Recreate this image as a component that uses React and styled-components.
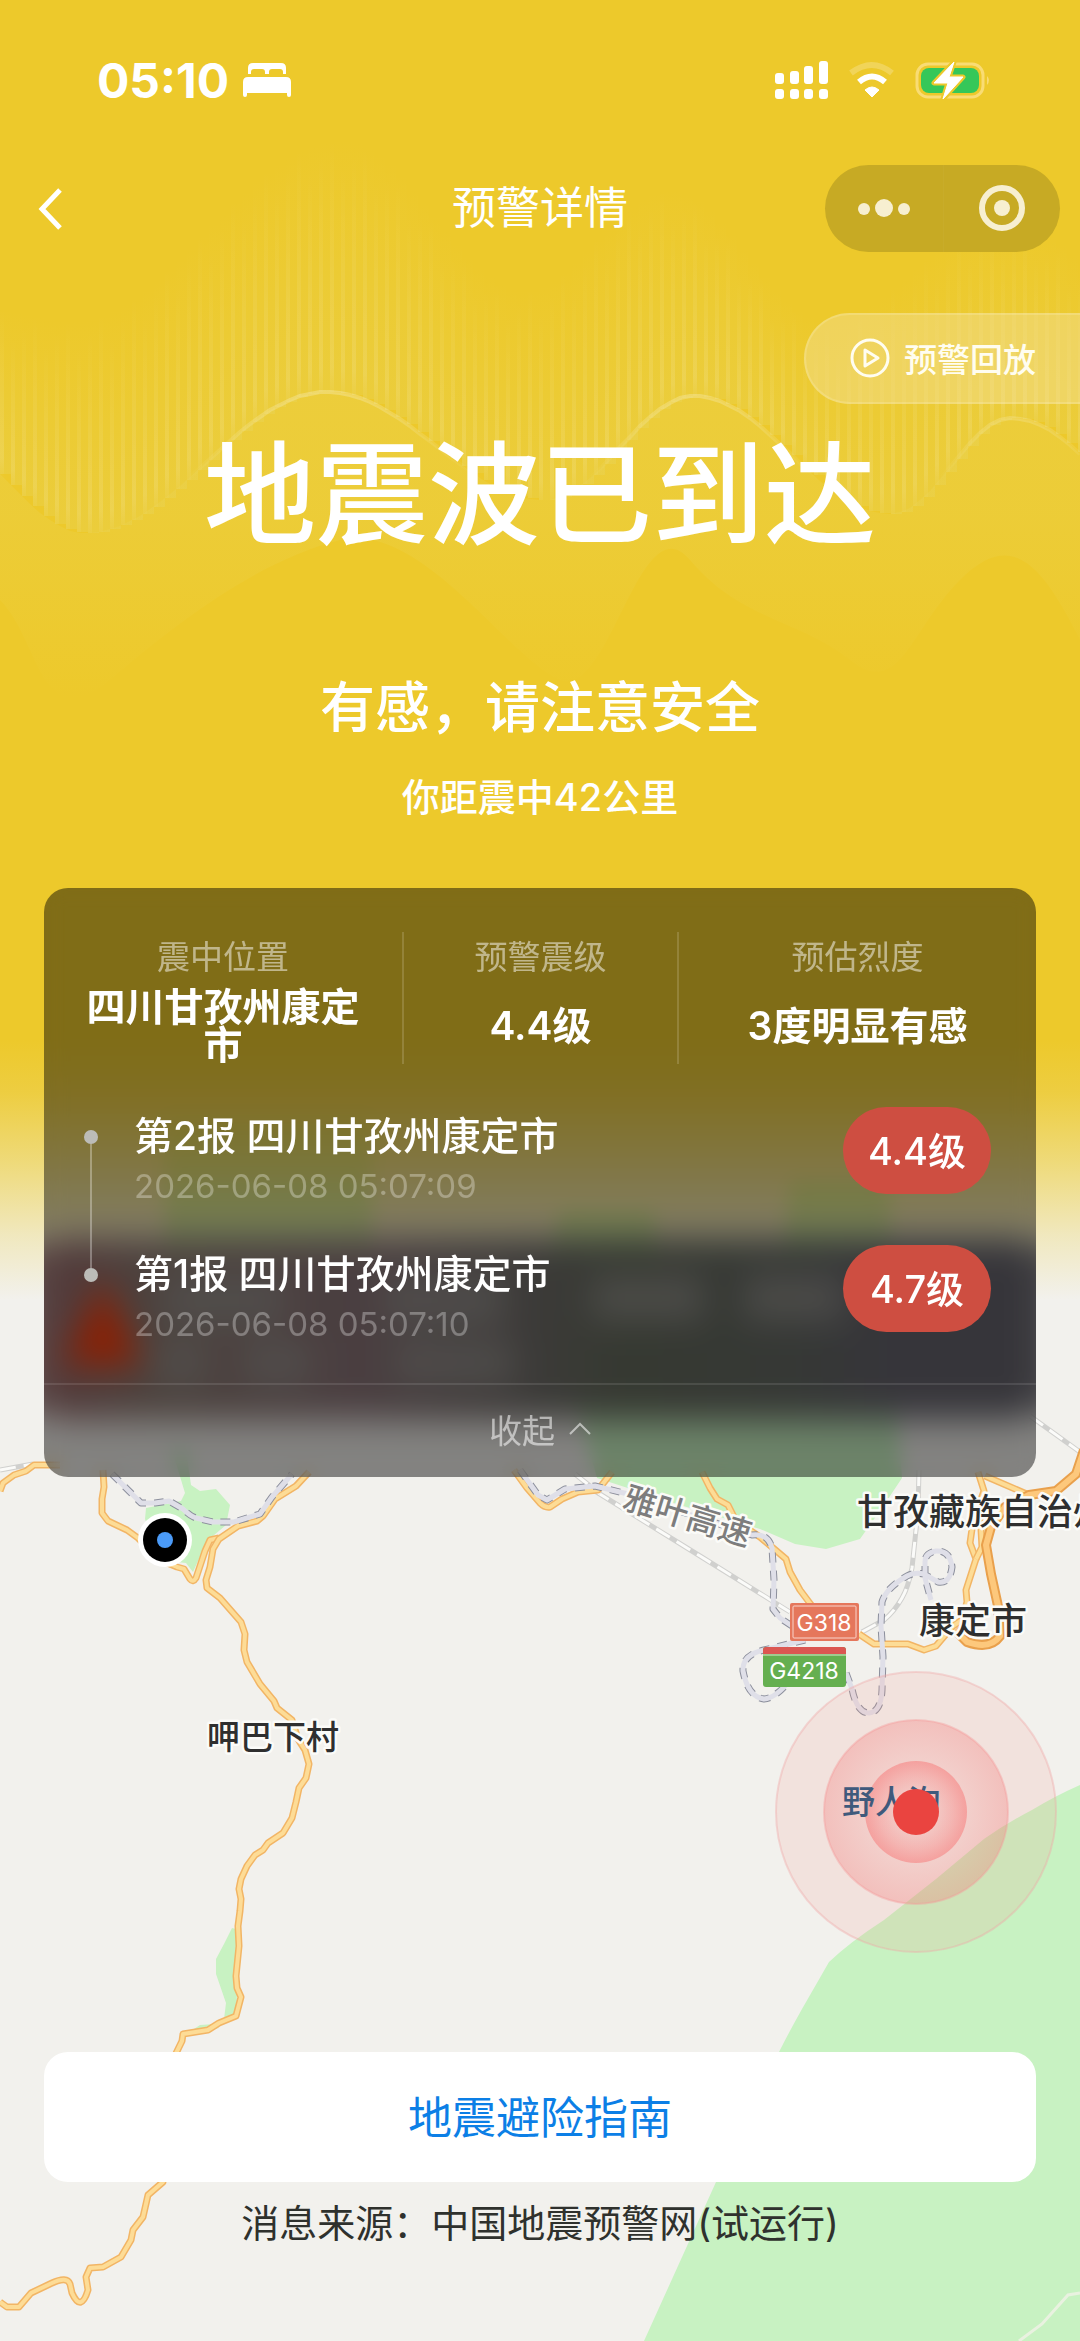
import { useState } from 'react';
import styled, { createGlobalStyle } from 'styled-components';


const stats = [
  { label: '震中位置', value: '四川甘孜州康定市' },
  { label: '预警震级', value: '4.4级' },
  { label: '预估烈度', value: '3度明显有感' },
]

const reports = [
  { id: 2, title: '第2报 四川甘孜州康定市', time: '2026-06-08 05:07:09', level: '4.4级' },
  { id: 1, title: '第1报 四川甘孜州康定市', time: '2026-06-08 05:07:10', level: '4.7级' },
]

// Key points of the seismic curve and of the height its bars fade out at
const CURVE = [[-60, 440], [85, 533], [327, 392], [545, 500], [694, 396], [890, 514], [1012, 418], [1180, 520]];
const ENVELOPE = [[-60, 300], [70, 320], [337, 140], [520, 290], [665, 190], [820, 320], [1000, 220], [1180, 330]];

// Cosine interpolation between the key points
const heightAt = (points, x) => {
  const i = points.findIndex((p) => p[0] > x);
  const [x0, y0] = points[i - 1];
  const [x1, y1] = points[i];
  const t = (1 - Math.cos(((x - x0) / (x1 - x0)) * Math.PI)) / 2;
  return Math.round(y0 + (y1 - y0) * t);
}

const barXs = Array.from({ length: 99 }, (_, i) => i * 11);
const curveXs = Array.from({ length: 109 }, (_, i) => i * 10);
const curvePath = 'M' + curveXs.map((x) => `${x} ${heightAt(CURVE, x)}`).join('L');

const Waves = () => (
  <WaveSvg viewBox="0 0 1080 760" preserveAspectRatio="none" aria-hidden="true">
    <defs>
      <linearGradient id="bar" x1="0" y1="0" x2="0" y2="1">
        <stop offset="0" stopColor="#fff" stopOpacity="0" />
        <stop offset="0.6" stopColor="#fff" stopOpacity="0.08" />
        <stop offset="0.9" stopColor="#fff" stopOpacity="0.12" />
        <stop offset="1" stopColor="#fff" stopOpacity="0.04" />
      </linearGradient>
      <linearGradient id="veil" x1="0" y1="0" x2="0" y2="1">
        <stop offset="0" stopColor="#e6d86a" stopOpacity="0" />
        <stop offset="1" stopColor="#e6d86a" stopOpacity="0.26" />
      </linearGradient>
      <linearGradient id="swell" x1="0" y1="390" x2="0" y2="700" gradientUnits="userSpaceOnUse">
        <stop offset="0" stopColor="#ead968" stopOpacity="0.26" />
        <stop offset="0.4" stopColor="#ead968" stopOpacity="0.2" />
        <stop offset="1" stopColor="#ead968" stopOpacity="0" />
      </linearGradient>
      <linearGradient id="crest" x1="0" y1="390" x2="0" y2="480" gradientUnits="userSpaceOnUse">
        <stop offset="0" stopColor="#fff" stopOpacity="0.24" />
        <stop offset="1" stopColor="#fff" stopOpacity="0" />
      </linearGradient>
    </defs>
    {barXs.map((x) => {
      const top = heightAt(ENVELOPE, x);
      const height = heightAt(CURVE, x) - top;
      return (
        <g key={x}>
          <rect x={x} y={top} width="11" height={height} fill="url(#veil)" />
          <rect x={x} y={top + (x % 3) * 14} width="4" height={height - (x % 3) * 14} fill="url(#bar)" />
        </g>
      )
    })}
    <path d={`${curvePath}V640C1040 560 1010 530 960 580S900 700 850 660S740 620 690 560S610 700 560 680S420 520 340 540S180 620 110 680S40 640 0 600Z`} fill="url(#swell)" />
    <path d={curvePath} fill="none" stroke="url(#crest)" strokeWidth="4" />
  </WaveSvg>
)

const Road = ({ d, main }) => (
  <>
    <path d={d} stroke={main ? '#e9a04c' : '#f2b565'} strokeWidth={main ? 10 : 7} />
    <path d={d} stroke={main ? '#fdc87c' : '#fddc96'} strokeWidth={main ? 6 : 4} />
  </>
)

const Motorway = ({ d }) => (
  <>
    <path d={d} stroke="#8c8f9c" strokeWidth="7" strokeDasharray="10 8" />
    <path d={d} stroke="#dfdfe8" strokeWidth="5" />
  </>
)

const Railway = ({ d }) => (
  <>
    <path d={d} stroke="#d0d0ce" strokeWidth="5" />
    <path d={d} stroke="#fbfbf9" strokeWidth="3" strokeDasharray="16 8" strokeLinecap="butt" />
  </>
)

const Map = () => (
  <MapSvg viewBox="0 0 1080 2341" preserveAspectRatio="xMidYMid slice" role="img" aria-label="震中地图">
    <defs>
      <radialGradient id="ring">
        <stop offset="0.4" stopColor="#f47070" stopOpacity="0.12" />
        <stop offset="1" stopColor="#f47070" stopOpacity="0.3" />
      </radialGradient>
      <radialGradient id="core">
        <stop offset="0.4" stopColor="#f87070" stopOpacity="0.12" />
        <stop offset="1" stopColor="#f86868" stopOpacity="0.45" />
      </radialGradient>
    </defs>

    <g fill="#c8f2c2">
      <path d="M165 1120H372V1260H165Z" />
      <path d="M560 1210H655V1300H540ZM790 1180H890V1300H780Z" />
      <path d="M172 1450L185 1493L181 1501L146 1508L145 1519L160 1560L186 1563L193 1572L207 1541L226 1525L230 1505L216 1489L200 1491L191 1485L186 1450Z" />
      <path d="M570 1380L597 1478L680 1505L760 1529L795 1544L826 1549L860 1539L884 1505L902 1478L895 1380Z" />
      <path d="M232 1928L224 1944L216 1959L216 1974L226 2003L224 2019L236 2015L240 1930ZM188 2033L200 2025L215 2024L219 2028Z" />
      <path d="M1080 1785Q1055 1796 1032 1810Q1005 1824 984 1839L936 1879L884 1920Q850 1942 829 1962L802 2009Q788 2034 779 2052L716 2182L644 2341H1080Z" />
    </g>
    <path d="M1080 2293L1068 2295L1042 2324L1019 2341" fill="none" stroke="#e9f2e0" strokeWidth="3" />

    <g fill="none" strokeLinejoin="round">
      <Railway d="M0 1470L33 1464" />
      <Railway d="M595 1491L700 1556L790 1612" />
      <Railway d="M575 1474L600 1494" />
      <Railway d="M919 1470L918 1511L912 1568Q908 1588 902 1598Q894 1612 884 1620L862 1632" />
      <Railway d="M1030 1416L1080 1452" />

      <Road d="M0 1491L3 1483L14 1475L26 1471L34 1465H60" />
      <Road d="M103 1470L104 1487L102 1499L102 1513L108 1521L127 1530L138 1538L160 1560L177 1567L184 1569L190 1579Q193 1583 196 1578L205 1551L210 1540L219 1538" />
      <Road d="M309 1472L296 1486L275 1499L263 1516L257 1521L238 1526L219 1539L213 1549L210 1567L206 1580L207 1588L220 1598L241 1622L245 1634L244 1650L247 1662L260 1684L274 1701L277 1708L292 1720L298 1739L305 1750L309 1764L306 1778L299 1788L296 1802L292 1818L286 1828L283 1833L268 1843L263 1850L255 1855L247 1866L241 1879L239 1889L241 1899L240 1911L238 1926L239 1946L236 1976L237 1988L241 1997L236 2016L219 2023L208 2030L183 2034L182 2041L163 2080V2182L148 2195L143 2217L133 2230L131 2240L121 2257L103 2267L90 2268L86 2277L88 2290Q81 2313 72 2293L70 2284Q67 2276 52 2283L31 2293L19 2307H7L0 2302" />
      <Road d="M514 1470L527 1488L540 1503Q545 1508 550 1507L562 1499L578 1492L598 1490L612 1472" />
      <Road d="M702 1472L710 1488L717 1499L728 1505L736 1521L760 1537L786 1559L790 1572L800 1590L812 1606" />
      <Road d="M859 1634L874 1644L908 1644L924 1650L936 1646L953 1626L962 1620L967 1602L966 1590L976 1559L970 1543L973 1522L984 1491L978 1472" />
      <Road d="M976 1559L982 1547L981 1529L990 1510" />
      <Road d="M985 1476L1029 1495" />
      <Road main d="M1084 1450L1076 1474L1056 1491L1029 1495L1005 1507L991 1527L986 1545L991 1574L998 1606L1000 1636Q990 1650 967 1642L955 1630" />

      <Motorway d="M112 1474L129 1491L141 1503H155L169 1501L183 1509Q190 1516 196 1518L213 1522H234L260 1514L272 1497L292 1474" />
      <Motorway d="M520 1470L538 1495L547 1500L565 1489L595 1486L628 1494L752 1535Q768 1533 772 1548L774 1580L773 1609L780 1618L795 1628" />
      <Motorway d="M805 1640L764 1650Q742 1655 743 1671Q748 1697 764 1699Q776 1698 790 1680" />
      <Motorway d="M846 1673L852 1689Q857 1713 869 1713Q881 1712 882 1690L883 1657L881 1626L882 1602Q886 1588 907 1576Q914 1572 924 1574L938 1582Q950 1584 952 1567Q950 1550 936 1551Q925 1553 925 1562V1578L931 1600" />
    </g>

    <MapLabel x="207" y="1749" size={33}>呷巴下村</MapLabel>
    <MapLabel x="857" y="1525" size={36}>甘孜藏族自治州</MapLabel>
    <MapLabel x="919" y="1634" size={36}>康定市</MapLabel>
    <MapLabel x="621" y="1508" size={33} tone="#7d7d7d" transform="rotate(17 621 1508)">雅叶高速</MapLabel>

    <rect x="790" y="1603" width="69" height="38" rx="2" fill="#e5775c" />
    <rect x="793" y="1606" width="63" height="32" rx="1" fill="none" stroke="#f9d5cb" strokeWidth="1" />
    <Shield x="824" y="1631">G318</Shield>
    <rect x="763" y="1647" width="83" height="40" rx="3" fill="#65af50" />
    <path d="M763 1654V1650Q763 1647 766 1647H843Q846 1647 846 1650V1654Z" fill="#db5752" />
    <path d="M763 1655H846" stroke="#d9e8cf" strokeWidth="1" />
    <Shield x="804" y="1679">G4218</Shield>

    <circle cx="916" cy="1812" r="140" fill="#f29c90" fillOpacity="0.17" stroke="#f0a8a8" strokeOpacity="0.4" strokeWidth="2" />
    <circle cx="916" cy="1812" r="92" fill="url(#ring)" stroke="#f49a9a" strokeOpacity="0.4" strokeWidth="2" />
    <circle cx="916" cy="1812" r="51" fill="url(#core)" />
    <MapLabel x="842" y="1814" size={33} tone="#3f5a7c" bare>野人沟</MapLabel>
    <circle cx="916" cy="1812" r="23" fill="#ea4440" />

    <circle cx="165" cy="1540" r="27" fill="#fff" />
    <circle cx="165" cy="1540" r="22" fill="#000" />
    <circle cx="165" cy="1540" r="8" fill="#4b9bf8" />
  </MapSvg>
)

// Map notice that shows only as a blur through the card
const Notice = () => (
  <NoticeClip>
    <NoticeSvg viewBox="0 0 992 180" preserveAspectRatio="none" aria-hidden="true">
      <defs>
        <linearGradient id="notice">
          <stop offset="0" stopColor="#9a6a6c" />
          <stop offset="0.12" stopColor="#8c7a72" />
          <stop offset="0.32" stopColor="#8a7478" />
          <stop offset="0.5" stopColor="#6e6c68" />
          <stop offset="0.58" stopColor="#646a5c" />
          <stop offset="0.75" stopColor="#646863" />
          <stop offset="0.85" stopColor="#65636c" />
        </linearGradient>
      </defs>
      <rect x="-10" width="1012" height="180" rx="30" fill="url(#notice)" />
      <g fill="#9a9994" fillOpacity="0.7">
        <rect x="120" y="36" width="120" height="50" />
        <rect x="340" y="36" width="120" height="50" />
        <rect x="548" y="36" width="112" height="46" />
        <rect x="700" y="36" width="100" height="46" />
        <rect x="112" y="104" width="50" height="40" />
        <rect x="200" y="104" width="66" height="40" />
        <rect x="350" y="104" width="120" height="40" />
      </g>
      <path d="M59 40L98 126H20Z" fill="#ff3c08" />
    </NoticeSvg>
  </NoticeClip>
)

const StatusIcons = () => (
  <svg width="216" height="40" viewBox="0 0 216 40" aria-hidden="true">
    <g fill="#fff">
      <rect x="0" y="13" width="9" height="11" rx="3" />
      <rect x="15" y="11" width="9" height="13" rx="3" />
      <rect x="29" y="6" width="9" height="18" rx="3" />
      <rect x="44" y="1" width="9" height="23" rx="3" />
      <rect x="0" y="29" width="9" height="10" rx="3" />
      <rect x="15" y="29" width="9" height="10" rx="3" />
      <rect x="29" y="29" width="9" height="10" rx="3" />
      <rect x="44" y="29" width="9" height="10" rx="3" />
      <path d="M97 37L90 30Q97 24 104 30Z" strokeLinejoin="round" stroke="#fff" strokeWidth="1" />
    </g>
    <path d="M84 22Q97 11 110 22" fill="none" stroke="#fff" strokeWidth="6" />
    <path d="M76 13Q97 -3 117 13" fill="none" stroke="#f4dc78" strokeOpacity="0.6" strokeWidth="6" />
    <rect x="142" y="4" width="66" height="33" rx="11" fill="none" stroke="#f9dc74" strokeWidth="3" />
    <rect x="146" y="8" width="58" height="25" rx="8" fill="#35c759" />
    <path d="M212 16Q216 20 212 25Z" fill="#f9dc74" />
    <path d="M179 2L159 23H173L168 39L188 17H174Z" fill="#fff" stroke="#edc92b" strokeWidth="5" paintOrder="stroke" strokeLinejoin="round" />
    <path d="M179 2L159 23H173L168 39L188 17H174Z" fill="#fff" stroke="#fff" strokeWidth="1" strokeLinejoin="round" />
  </svg>
)

const App = () => {

  const [open, setOpen] = useState(true);

  return (
    <Screen>
      <GlobalStyle />
      <Map />
      <Tint><Waves /></Tint>

      <Content>
        <StatusBar>
          <Clock>
            05:10
            <svg width="48" height="36" viewBox="0 0 48 36" fill="#fff" aria-hidden="true">
              <path d="M5 12V6Q5 1 10 1H38Q43 1 43 6V12H40V10Q40 7 37 7H29Q26 7 26 10V12H22V10Q22 7 19 7H11Q8 7 8 10V12Z" />
              <path d="M0 33V20Q0 15 5 15H43Q48 15 48 20V33Q48 35 46 35T44 33V31H4V33Q4 35 2 35T0 33Z" />
            </svg>
          </Clock>
          <StatusIcons />
        </StatusBar>

        <NavBar>
          <BackButton type="button" aria-label="返回">
            <svg width="28" height="44" viewBox="0 0 28 44" fill="none" stroke="#fff" strokeWidth="5" aria-hidden="true">
              <path d="M24 4L6 23L24 42" />
            </svg>
          </BackButton>
          <NavTitle>预警详情</NavTitle>
          <Capsule>
            <CapsuleButton type="button" aria-label="更多">
              <svg width="54" height="48" viewBox="0 0 54 48" fill="#f7efd0" aria-hidden="true">
                <circle cx="7" cy="25" r="6" />
                <circle cx="27" cy="24" r="9" />
                <circle cx="47" cy="25" r="6" />
              </svg>
            </CapsuleButton>
            <CapsuleButton type="button" aria-label="关闭">
              <svg width="48" height="48" viewBox="0 0 48 48" aria-hidden="true">
                <circle cx="24" cy="24" r="20" fill="none" stroke="#f7efd0" strokeWidth="6" />
                <circle cx="24" cy="24" r="8" fill="#f7efd0" />
              </svg>
            </CapsuleButton>
          </Capsule>
        </NavBar>

        <ReplayButton type="button">
          <svg width="40" height="40" viewBox="0 0 40 40" fill="none" stroke="#fffdf0" strokeWidth="3" strokeLinejoin="round" aria-hidden="true">
            <circle cx="20" cy="20" r="18" />
            <path d="M15 12V28L28 20Z" />
          </svg>
          预警回放
        </ReplayButton>

        <Headline>地震波已到达</Headline>
        <Advice>有感，请注意安全</Advice>
        <Distance>你距震中42公里</Distance>

        <CardArea>
          <Notice />
          <Card>
            <Stats>
              {stats.map((item) => (
                <Stat key={item.label}>
                  <StatLabel>{item.label}</StatLabel>
                  <StatValue>{item.value}</StatValue>
                </Stat>
              ))}
            </Stats>
            {open &&
              <Reports>
                {reports.map((item, i) => (
                  <Report key={item.id}>
                    <Marker>
                      <Stem $height="23px" $visible={i > 0} />
                      <Dot />
                      <Stem $grow $visible={i < reports.length - 1} />
                    </Marker>
                    <ReportText>
                      <ReportTitle>{item.title}</ReportTitle>
                      <ReportTime>{item.time}</ReportTime>
                    </ReportText>
                    <Level>{item.level}</Level>
                  </Report>
                ))}
              </Reports>
            }
            <Collapse type="button" onClick={() => setOpen(!open)}>
              {open ? '收起' : '展开'}
              <Chevron $open={open} width="22" height="16" viewBox="0 0 22 16" fill="none" stroke="currentColor" strokeWidth="2" aria-hidden="true">
                <path d="M1 13L11 3L21 13" />
              </Chevron>
            </Collapse>
          </Card>
        </CardArea>

        <Footer>
          <GuideButton type="button">地震避险指南</GuideButton>
          <Source>消息来源：中国地震预警网(试运行)</Source>
        </Footer>
      </Content>
    </Screen>
  )
}

const GlobalStyle = createGlobalStyle`
  * {
    box-sizing:border-box ;
  }
  body {
    margin:0 ;
    background-color:#f2f1ed ;
    font-family:Inter, 'Noto Sans CJK SC', sans-serif ;
  }
  button {
    border:none ;
    padding:0 ;
    background:none ;
    font-family:inherit ;
    cursor:pointer ;
  }
`

const Screen = styled.div`
  position:relative ;
  min-height:100vh ;
  overflow:hidden ;
  color:#fff ;
`

const MapSvg = styled.svg`
  position:absolute ;
  inset:0 ;
  width:100% ;
  height:100% ;
`

const MapLabel = styled.text`
  font-size:${(props) => props.size}px ;
  font-weight:500 ;
  fill:${(props) => props.tone || '#2f2f2f'} ;
  stroke:${(props) => (props.bare ? 'none' : '#fbfbf8')} ;
  stroke-width:5px ;
  stroke-linejoin:round ;
  paint-order:stroke ;
`

const Shield = styled.text`
  font-size:23px ;
  font-weight:400 ;
  text-anchor:middle ;
  fill:#fff ;
`

const Tint = styled.div`
  position:absolute ;
  inset:0 0 auto ;
  height:1300px ;
  background:linear-gradient(
    180deg,
    #edc92b 0%,
    #edc92b 80%,
    rgba(237, 203, 54, 0.94) 84%,
    rgba(237, 207, 66, 0.7) 89%,
    rgba(237, 213, 90, 0.32) 95%,
    rgba(240, 225, 150, 0) 100%
  ) ;
`

const WaveSvg = styled.svg`
  display:block ;
  width:100% ;
  height:760px ;
`

const Content = styled.div`
  position:relative ;
  display:flex ;
  flex-direction:column ;
  min-height:100vh ;
`

const StatusBar = styled.header`
  display:flex ;
  align-items:center ;
  justify-content:space-between ;
  height:160px ;
  padding:0 89px 0 97px ;
`

const Clock = styled.div`
  display:flex ;
  align-items:center ;
  gap:14px ;
  font-size:48px ;
  font-weight:700 ;
`

const NavBar = styled.nav`
  display:grid ;
  grid-template-columns:1fr auto 1fr ;
  align-items:center ;
  height:96px ;
  padding:0 20px ;
`

const BackButton = styled.button`
  display:flex ;
  justify-self:start ;
  padding-left:16px ;
`

const NavTitle = styled.h1`
  margin:0 ;
  font-size:44px ;
  font-weight:400 ;
  line-height:64px ;
`

const Capsule = styled.div`
  display:grid ;
  grid-template-columns:1fr 1fr ;
  justify-self:end ;
  width:235px ;
  height:87px ;
  border-radius:44px ;
  background-color:#c7aa24 ;
`

const CapsuleButton = styled.button`
  display:flex ;
  align-items:center ;
  justify-content:center ;

  & + & {
    border-left:1px solid rgba(255, 255, 255, 0.03) ;
  }
`

const ReplayButton = styled.button`
  display:flex ;
  align-items:center ;
  align-self:flex-end ;
  gap:14px ;
  height:91px ;
  margin-top:57px ;
  padding:0 44px 2px ;
  border:2px solid rgba(255, 255, 255, 0.15) ;
  border-right:none ;
  border-radius:46px 0 0 46px ;
  background-color:rgba(245, 225, 150, 0.45) ;
  color:#fffdf0 ;
  font-size:33px ;
  font-weight:500 ;
`

const Headline = styled.h2`
  margin:27px 0 0 ;
  font-size:112px ;
  font-weight:500 ;
  line-height:128px ;
  text-align:center ;
`

const Advice = styled.p`
  margin:112px 0 0 ;
  font-size:55px ;
  font-weight:500 ;
  line-height:72px ;
  text-align:center ;
`

const Distance = styled.p`
  margin:26px 0 0 ;
  font-size:38px ;
  font-weight:500 ;
  line-height:56px ;
  text-align:center ;
`

const CardArea = styled.section`
  position:relative ;
  margin:63px 44px 0 ;
`

const NoticeClip = styled.div`
  position:absolute ;
  inset:0 ;
  border-radius:24px ;
  overflow:hidden ;
`

const NoticeSvg = styled.svg`
  position:absolute ;
  left:0 ;
  bottom:58px ;
  width:100% ;
  height:180px ;
  overflow:visible ;
  filter:blur(14px) ;
`

const Card = styled.div`
  position:relative ;
  padding-top:44px ;
  border-radius:24px ;
  background-color:rgba(0, 0, 0, 0.46) ;
  backdrop-filter:blur(10px) ;
  overflow:hidden ;
`

const Stats = styled.dl`
  display:grid ;
  grid-template-columns:358fr 275fr 359fr ;
  min-height:132px ;
  margin:0 ;
`

const Stat = styled.div`
  display:flex ;
  flex-direction:column ;
  padding:0 28px ;
  text-align:center ;

  & + & {
    border-left:2px solid rgba(255, 255, 255, 0.15) ;
  }
`

const StatLabel = styled.dt`
  color:rgba(255, 255, 255, 0.5) ;
  font-size:33px ;
  line-height:50px ;
`

const StatValue = styled.dd`
  display:flex ;
  flex:1 ;
  align-items:center ;
  justify-content:center ;
  margin:0 ;
  padding-top:6px ;
  font-size:39px ;
  font-weight:600 ;
  line-height:38px ;
`

const Reports = styled.ul`
  margin:43px 0 0 ;
  padding:0 ;
  list-style:none ;
`

const Report = styled.li`
  display:flex ;
  height:138px ;
  padding:0 45px 0 40px ;
`

const Marker = styled.div`
  display:flex ;
  flex-direction:column ;
  align-items:center ;
  width:14px ;
`

const Stem = styled.span`
  width:2px ;
  height:${(props) => props.$height || 'auto'} ;
  flex:${(props) => (props.$grow ? 1 : 'none')} ;
  background-color:${(props) => (props.$visible ? 'rgba(255, 255, 255, 0.3)' : 'transparent')} ;
`

const Dot = styled.span`
  width:14px ;
  height:14px ;
  border-radius:50% ;
  background-color:#bcbcb8 ;
`

const ReportText = styled.div`
  flex:1 ;
  padding:3px 0 0 36px ;
`

const ReportTitle = styled.div`
  font-size:39px ;
  font-weight:500 ;
  line-height:52px ;
`

const ReportTime = styled.time`
  display:block ;
  color:rgba(255, 255, 255, 0.3) ;
  font-size:33px ;
  line-height:48px ;
`

const Level = styled.span`
  display:flex ;
  align-items:center ;
  justify-content:center ;
  width:148px ;
  height:87px ;
  padding-bottom:4px ;
  border-radius:44px ;
  background-color:#ce4e41 ;
  font-size:38px ;
  font-weight:500 ;
`

const Collapse = styled.button`
  display:flex ;
  align-items:center ;
  justify-content:center ;
  gap:14px ;
  width:100% ;
  height:94px ;
  padding-bottom:4px ;
  border-top:2px solid rgba(255, 255, 255, 0.1) ;
  color:rgba(255, 255, 255, 0.55) ;
  font-size:33px ;
`

const Chevron = styled.svg`
  transform:${(props) => (props.$open ? 'none' : 'rotate(180deg)')} ;
`

const Footer = styled.footer`
  margin-top:auto ;
  padding:0 44px 90px ;
`

const GuideButton = styled.button`
  width:100% ;
  height:130px ;
  padding-bottom:4px ;
  border-radius:24px ;
  background-color:#fff ;
  color:#0c7fe6 ;
  font-size:44px ;
`

const Source = styled.p`
  margin:14px 0 0 ;
  color:#2f312d ;
  font-size:38px ;
  line-height:55px ;
  text-align:center ;
`

export default App
